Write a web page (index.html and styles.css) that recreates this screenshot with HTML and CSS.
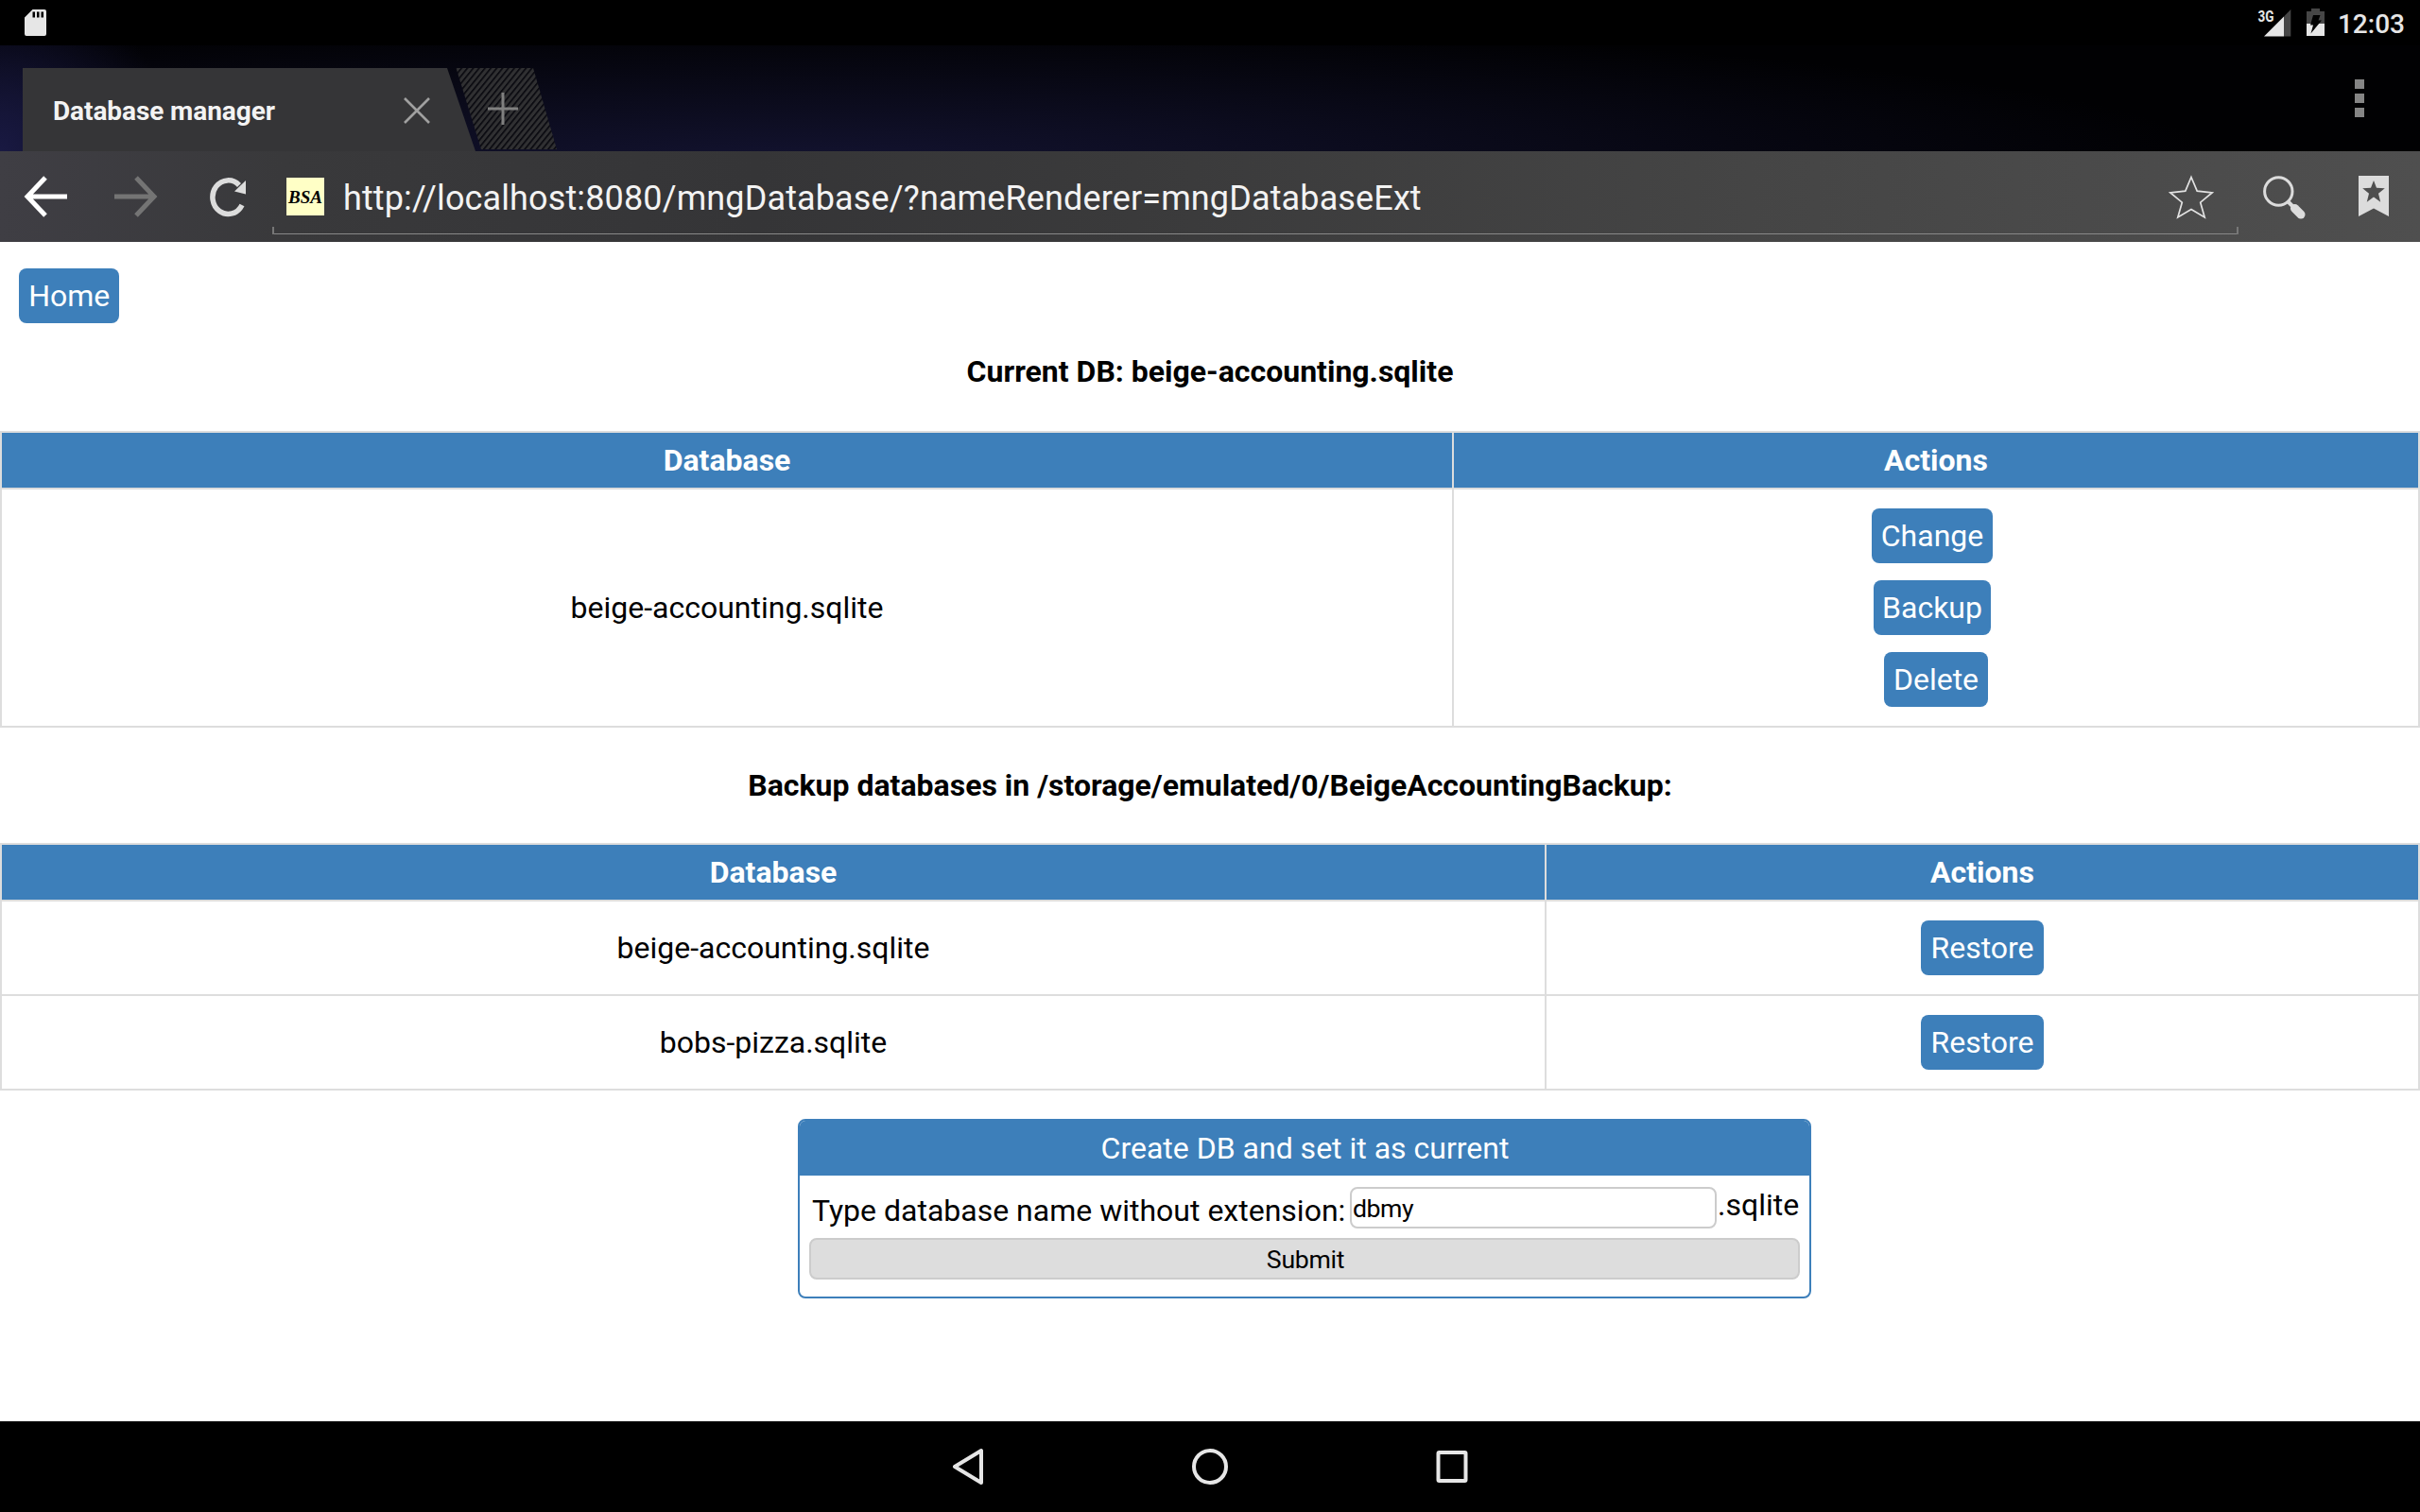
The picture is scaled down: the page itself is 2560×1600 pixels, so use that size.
FILE: index.html
```html
<!DOCTYPE html>
<html lang="en">
<head>
<meta charset="utf-8">
<title>Database manager</title>
<link rel="stylesheet" href="styles.css">
</head>
<body>
<div class="screen">
  <header class="status">
    <svg class="sd" width="24" height="28" viewBox="0 0 24 28"><path fill="#e6e6e6" fill-rule="evenodd" d="M8.500 0H21a2 2 0 0 1 2 2v24a2 2 0 0 1-2 2H2a2 2 0 0 1-2-2V8.500zM8.500 2.500v6h2.500v-6zm4.500 0v6h2.500v-6zm4.500 0v6H20v-6z"/></svg>
    <div class="status-right">
      <svg class="signal" width="38" height="32" viewBox="0 0 38 32"><path fill="#e6e6e6" d="M7 30.500 28 9.500v21z"/><path fill="#464646" d="M28 9.500 35.300 2v28.500H28z"/><text class="net" x="0.500" y="14.500" textLength="17" lengthAdjust="spacingAndGlyphs">3G</text></svg>
      <svg class="battery" width="20" height="30" viewBox="0 0 20 30"><path fill="#464646" d="M0 3h5V0h9v3h5v13H0z"/><path fill="#e6e6e6" d="M0 16h19v13H0z"/><path fill="#000" d="M7 7h7.500l-2 5.500H16L4.500 26.500l2.500-9H4z"/></svg>
      <span class="clock">12:03</span>
    </div>
  </header>

  <nav class="tabs">
    <div class="tab">
      <span class="tab-title">Database manager</span>
      <svg class="tab-close" width="28" height="28" viewBox="0 0 28 28"><path fill="none" stroke="#a0a0a0" stroke-width="2.600" d="M1 1 27 27M27 1 1 27"/></svg>
    </div>
    <svg class="newtab" width="108" height="88" viewBox="0 0 108 88">
      <defs><pattern id="hatch" width="6.200" height="10" patternUnits="userSpaceOnUse" patternTransform="skewX(-39)"><path fill="#303032" d="M0 0h6.200v10H0z"/><path fill="#0c0c12" d="M0 0h2.300v10H0z"/></pattern></defs>
      <path fill="url(#hatch)" d="M1.500 0H83l25 86H28z"/>
      <path fill="none" stroke="#808080" stroke-width="3" d="M35 43h32M51 26v34"/>
    </svg>
    <svg class="menu" width="10" height="40" viewBox="0 0 10 40"><path fill="#858585" d="M0 0h10v10H0zM0 15h10v10H0zM0 30h10v10H0z"/></svg>
  </nav>

  <div class="toolbar">
    <svg class="back" width="46" height="44" viewBox="0 0 46 44"><path fill="none" stroke="#fff" stroke-width="5" d="M23 2 4 22 23 42M4 22h42"/></svg>
    <svg class="fwd" width="46" height="44" viewBox="0 0 46 44"><path fill="none" stroke="#747474" stroke-width="5" d="M23 2 42 22 23 42M42 22H0"/></svg>
    <svg class="reload" width="40" height="42" viewBox="0 0 40 42"><path fill="none" stroke="#dcdcdc" stroke-width="5.500" d="M35 29A16.500 17.800 0 1 1 32 8"/><path fill="#dcdcdc" d="M39 3v14.500l-12-3z"/></svg>
    <div class="address">
      <svg class="favicon" width="40" height="40" viewBox="0 0 40 40"><path fill="#ffffc6" d="M0 0h40v40H0z"/><text class="favtext" x="2" y="26.500" textLength="36" lengthAdjust="spacingAndGlyphs">BSA</text></svg>
      <span class="url">http://localhost:8080/mngDatabase/?nameRenderer=mngDatabaseExt</span>
      <svg class="star" width="48" height="48" viewBox="0 0 48 48"><path fill="none" stroke="#e2e2e2" stroke-width="1.700" d="M24 2.500 30.200 17.200 46 19 33.700 29.200 38.200 45 24 36.500 9.800 45 14.300 29.200 2 19 17.800 17.200z"/></svg>
    </div>
    <svg class="search" width="48" height="48" viewBox="0 0 48 48"><circle cx="17.300" cy="17.500" r="14.700" fill="none" stroke="#dcdcdc" stroke-width="3"/><path stroke="#dcdcdc" stroke-width="4" d="m27 28 6 6"/><path stroke="#dcdcdc" stroke-width="9" stroke-linecap="round" d="m34.500 35.500 6.500 6.500"/></svg>
    <svg class="marks" width="32" height="43" viewBox="0 0 32 43"><path fill="#dcdcdc" fill-rule="evenodd" d="M0 0h32v43l-16-8.500L0 43zM16 5l-3 7.800-8.800.5 6.800 5.400-2.200 9L16 22.500l7.200 5.200-2.200-9 6.800-5.400-8.800-.5z"/></svg>
  </div>

  <main class="page">
    <div class="home"><a class="btn wide">Home</a></div>
    <h1 class="heading">Current DB: beige-accounting.sqlite</h1>
    <table class="grid current">
      <tr class="head"><th class="name">Database</th><th>Actions</th></tr>
      <tr><td>beige-accounting.sqlite</td><td><div class="stack"><a class="btn spaced">Change</a><a class="btn spaced tight">Backup</a><a class="btn wide">Delete</a></div></td></tr>
    </table>
    <h1 class="heading second">Backup databases in /storage/emulated/0/BeigeAccountingBackup:</h1>
    <table class="grid backups">
      <tr class="head"><th class="name">Database</th><th>Actions</th></tr>
      <tr><td>beige-accounting.sqlite</td><td><a class="btn wide">Restore</a></td></tr>
      <tr><td>bobs-pizza.sqlite</td><td><a class="btn wide">Restore</a></td></tr>
    </table>
    <form class="create">
      <div class="create-title">Create DB and set it as current</div>
      <div class="field">
        <label class="label" for="dbname">Type database name without extension:</label>
        <input class="input" id="dbname" type="text" value="dbmy">
        <span class="suffix">.sqlite</span>
      </div>
      <button class="submit" type="button">Submit</button>
    </form>
  </main>

  <footer class="navbar">
    <svg width="38" height="40" viewBox="0 0 38 40"><path fill="none" stroke="#e6e6e6" stroke-width="4" stroke-linejoin="round" d="M33 3v34L5 20z"/></svg>
    <svg width="40" height="40" viewBox="0 0 40 40"><circle cx="20" cy="20" r="17" fill="none" stroke="#e6e6e6" stroke-width="4"/></svg>
    <svg width="38" height="38" viewBox="0 0 38 38"><rect x="4.500" y="4" width="29" height="30" rx="1" fill="none" stroke="#e6e6e6" stroke-width="4"/></svg>
  </footer>
</div>
</body>
</html>
```
FILE: styles.css
```css
* { box-sizing: border-box; }
body { margin: 0; background: #fff; color: #000; font-family: Roboto, sans-serif; font-size: 32px; line-height: 38px; }
svg { display: block; flex: none; }
.screen { width: 2560px; height: 1600px; display: flex; flex-direction: column; overflow: hidden; }

.status { height: 48px; flex: none; background: #000; display: flex; justify-content: space-between; padding: 0 16px 0 26px; }
.sd { margin-top: 10px; }
.status-right { display: flex; }
.signal { margin: 8px 13px 0 0; }
.net { font: bold 16px Roboto, sans-serif; fill: #e6e6e6; }
.battery { margin: 9px 13px 0 1px; }
.clock { font-size: 28px; font-weight: 500; line-height: 33px; margin-top: 9px; color: #e6e6e6; }

.tabs { height: 112px; flex: none; display: flex; padding: 24px 59px 0 24px;
  background: radial-gradient(ellipse 180px 190px at 0 112px, #191942, transparent), radial-gradient(ellipse 1500px 150px at 850px 124px, #131330, transparent), #010103; }
.tab { width: 480px; display: flex; background: #353537; clip-path: polygon(0 0, 449px 0, 479px 100%, 0 100%); padding-left: 32px; }
.tab-title { width: 371px; font-size: 28px; line-height: 33px; font-weight: 700; letter-spacing: -0.080px; color: #f3f3f3; margin-top: 29px; }
.tab-close { margin-top: 31px; }
.newtab { margin-left: -23px; }
.menu { margin: 12px 0 0 auto; }

.toolbar { height: 96px; flex: none; display: flex; background: linear-gradient(90deg, #3f3e44, #39393b 300px, #353537 800px, #3a3a3b 1200px, #454545 1850px, #4f4f4f); }
.back { margin: 26px 0 0 25px; }
.fwd { margin: 26px 0 0 50px; }
.reload { margin: 28px 0 0 54px; }
.address { width: 2080px; height: 88px; margin-left: 27px; display: flex; padding-left: 15px;
  background: linear-gradient(#777, #777) 0 100% / 2px 8px no-repeat, linear-gradient(#777, #777) 100% 100% / 2px 8px no-repeat, linear-gradient(#888, #888) 0 100% / 100% 1px no-repeat; }
.favicon { margin-top: 28px; }
.favtext { font: italic bold 18px "Liberation Serif", serif; fill: #000; }
.url { font-size: 36px; line-height: 42px; letter-spacing: 0.130px; color: #f3f3f3; margin: 29px 0 0 20px; flex: 1; }
.star { margin: 25px 26px 0 0; }
.search { margin: 25px 0 0 25px; }
.marks { margin: 26px 0 0 54px; }

.page { height: 1248px; flex: none; background: #fff; }
.home { height: 118px; padding: 28px 20px; }
.btn { display: inline-block; height: 58px; padding: 10px 9.600px; border-radius: 8px; background: #3d7fba; color: #fff; vertical-align: top; }
.wide { padding: 10px 10.200px; }
.tight { padding: 10px 8.800px; }
.heading { height: 82px; margin: 0; font-size: 32px; line-height: 38px; font-weight: 700; text-align: center; }
.second { height: 122px; padding-top: 42px; }
.grid { width: 2560px; table-layout: fixed; border-collapse: collapse; text-align: center; }
.grid th, .grid td { padding: 0; border: 2px solid #ddd; vertical-align: middle; }
.grid th { height: 60px; background: #3d7fba; color: #fff; }
.current .name { width: 1536px; }
.backups .name { width: 1634px; }
.current td { height: 252px; }
.backups td { height: 100px; }
.stack { display: flex; flex-direction: column; align-items: center; gap: 18px; }
.spaced { margin-right: 8px; }

.create { width: 1072px; height: 190px; margin: 30px 0 0 844px; border: 2px solid #3d7fba; border-radius: 8px; overflow: hidden; }
.create-title { height: 58px; padding: 10px 0 0 1px; background: #3d7fba; color: #fff; text-align: center; }
.field { display: flex; padding: 12px 0 0 13px; height: 66px; }
.label { width: 569px; margin-top: 6px; white-space: nowrap; }
.input { width: 388px; height: 44px; padding: 1px 0 0 1px; border: 2px solid #ccc; border-radius: 8px; background: #fff; color: #000; font: 26.670px Roboto, sans-serif; letter-spacing: -0.500px; }
.suffix { margin-left: 1px; }
.submit { display: block; width: 1048px; height: 44px; margin-left: 10px; padding: 1px 0 0 2px; border: 2px solid #ccc; border-radius: 8px; background: #ddd; color: #000; font: 26.670px Roboto, sans-serif; letter-spacing: -0.300px; }

.navbar { height: 96px; flex: none; background: #000; display: flex; justify-content: center; align-items: center; gap: 217px; }
```
